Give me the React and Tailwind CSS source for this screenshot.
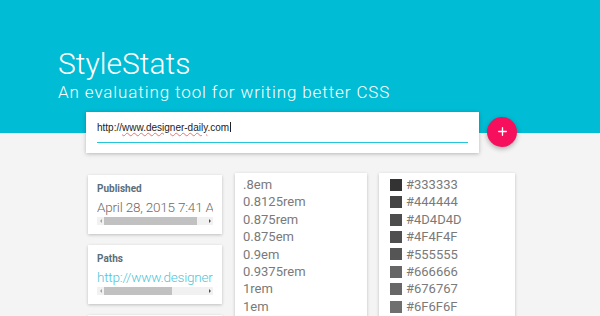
import { Plus } from 'lucide-react';

const sizes = ['.8em', '0.8125rem', '0.875rem', '0.875em', '0.9em', '0.9375rem', '1rem', '1em', '1.1em'];
const colors = ['#333333', '#444444', '#4D4D4D', '#4F4F4F', '#555555', '#666666', '#676767', '#6F6F6F', '#777777'];

function ScrollBar({ thumb }) {
  return (
    <div className="flex h-[8px] items-center bg-[#f1f1f1]">
      <span className="flex w-[7px] justify-center">
        <span className="h-0 w-0 border-y-[2px] border-r-[2px] border-y-transparent border-r-[#a3a3a3]" />
      </span>
      <div className="flex-1">
        <div className="h-[8px] bg-[#c1c1c1]" style={{ width: thumb }} />
      </div>
      <span className="flex w-[7px] justify-center">
        <span className="h-0 w-0 border-y-[2px] border-l-[2px] border-y-transparent border-l-[#505050]" />
      </span>
    </div>
  );
}

function InfoCard({ label, value, link, thumb }) {
  return (
    <div className="bg-white px-[9px] pt-[7px] pb-[9px] shadow-[0_1px_3px_rgba(0,0,0,0.22)]">
      <div className="text-[10px] font-bold leading-[14px] text-[#5a6e7a]">{label}</div>
      <div
        className={`mt-[2px] overflow-hidden whitespace-nowrap text-[13.5px] font-light leading-[19px] tracking-[-0.2px] ${
          link ? 'text-[#4dc6d8]' : 'text-[#6b6b6b]'
        }`}
      >
        {value}
      </div>
      <ScrollBar thumb={thumb} />
    </div>
  );
}

export default function App() {
  return (
    <div className="h-[316px] w-[600px] overflow-hidden bg-[#f4f4f4] font-['Roboto',sans-serif]">
      {/* Header */}
      <div className="h-[133px] bg-[#00bcd4] pl-[58px] pt-[46px] text-white">
        <h1 className="text-[30px] font-light leading-[36px]">StyleStats</h1>
        <p className="text-[17px] font-light leading-[20px] tracking-[0.9px]">
          An evaluating tool for writing better CSS
        </p>
      </div>

      {/* URL input */}
      <div className="-mt-[21px] flex items-center pl-[86px]">
        <div className="h-[41px] w-[393px] bg-white px-[11px] pt-[9px] shadow-[0_1px_4px_rgba(0,0,0,0.25)]">
          <div className="border-b border-[#26c6da] pb-[7px] font-['Liberation_Sans',sans-serif] text-[10px] leading-[14px] text-[#222]">
            http://<span className="underline decoration-[#e57373] decoration-wavy">www.designer-daily</span>.com
            <span className="ml-[1px] inline-block h-[10px] w-px translate-y-[1px] bg-[#222]" />
          </div>
        </div>
        <button className="ml-[8px] mt-[-2px] flex h-[30px] w-[30px] items-center justify-center rounded-full bg-[#f50f5d] text-white shadow-[0_2px_5px_rgba(0,0,0,0.3)]">
          <Plus size={13} strokeWidth={2.5} />
        </button>
      </div>

      {/* Stats */}
      <div className="mt-[20px] flex items-start pl-[88px]">
        <div className="flex w-[134px] flex-col gap-[11px] pt-[2px]">
          <InfoCard label="Published" value="April 28, 2015 7:41 AM" thumb={93} />
          <InfoCard label="Paths" value="http://www.designer-daily.com/" link thumb={68} />
          <div className="h-[40px] bg-white shadow-[0_1px_3px_rgba(0,0,0,0.22)]" />
        </div>

        <div className="ml-[13px] h-[200px] w-[132px] bg-white pl-[8px] pt-[3px] shadow-[0_1px_3px_rgba(0,0,0,0.22)]">
          {sizes.map((s) => (
            <div key={s} className="text-[13px] leading-[17.4px] text-[#7a7a7a]">
              {s}
            </div>
          ))}
        </div>

        <div className="ml-[12px] h-[200px] w-[136px] bg-white pl-[11px] pt-[3px] shadow-[0_1px_3px_rgba(0,0,0,0.22)]">
          {colors.map((c) => (
            <div key={c} className="flex items-center text-[13px] leading-[17.4px] text-[#7a7a7a]">
              <span className="mr-[4px] h-[12px] w-[12px]" style={{ backgroundColor: c }} />
              {c}
            </div>
          ))}
        </div>
      </div>
    </div>
  );
}
